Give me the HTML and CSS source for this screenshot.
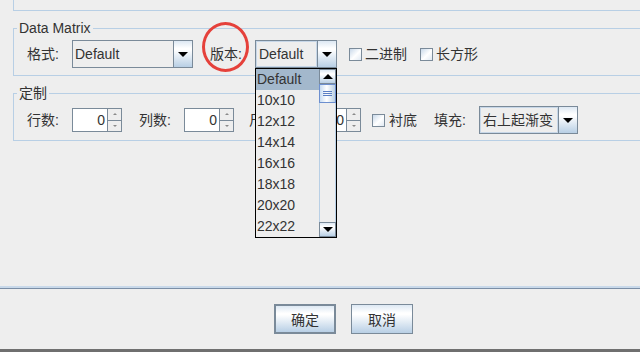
FILE: index.html
```html
<!DOCTYPE html>
<html lang="zh">
<head>
    <meta charset="UTF-8">
    <title>Data Matrix 设置</title>
    <link rel="stylesheet" href="styles.css">
</head>
<body>
    <div class="dialog">
        <!-- tail of the panel above -->
        <div class="prev-panel"></div>

        <!-- Data Matrix -->
        <fieldset class="group group-first">
            <legend>Data Matrix</legend>
            <div class="row row-first">
                <span class="label">格式:</span>
                <div class="combo combo-format">
                    <span class="combo-text">Default</span>
                    <span class="combo-arrow"></span>
                </div>
                <span class="label label-version">版本:</span>
                <div class="combo combo-version focused">
                    <span class="combo-text">Default</span>
                    <span class="combo-arrow"></span>

                    <div class="popup">
                        <ul class="popup-list">
                            <li class="selected">Default</li>
                            <li>10x10</li>
                            <li>12x12</li>
                            <li>14x14</li>
                            <li>16x16</li>
                            <li>18x18</li>
                            <li>20x20</li>
                            <li>22x22</li>
                        </ul>
                        <div class="scrollbar">
                            <span class="sb-btn sb-up"></span>
                            <span class="sb-thumb"><span class="grip"></span></span>
                            <span class="sb-track"></span>
                            <span class="sb-btn sb-down"></span>
                        </div>
                    </div>
                </div>
                <label class="check check-binary"><span class="box"></span>二进制</label>
                <label class="check check-rect"><span class="box"></span>长方形</label>
            </div>
        </fieldset>

        <!-- 定制 -->
        <fieldset class="group group-second">
            <legend>定制</legend>
            <div class="row row-second">
                <span class="label">行数:</span>
                <div class="spinner">
                    <span class="spin-value">0</span>
                    <span class="spin-buttons"><span class="spin-up"></span><span class="spin-down"></span></span>
                </div>
                <span class="label label-cols">列数:</span>
                <div class="spinner">
                    <span class="spin-value">0</span>
                    <span class="spin-buttons"><span class="spin-up"></span><span class="spin-down"></span></span>
                </div>
                <span class="label label-size">尺寸:</span>
                <div class="spinner">
                    <span class="spin-value">0</span>
                    <span class="spin-buttons"><span class="spin-up"></span><span class="spin-down"></span></span>
                </div>
                <label class="check check-bg"><span class="box"></span>衬底</label>
                <span class="label label-fill">填充:</span>
                <div class="combo combo-fill focused">
                    <span class="combo-text">右上起渐变</span>
                    <span class="combo-arrow"></span>
                </div>
            </div>
        </fieldset>

        <div class="filler"></div>
        <div class="separator"></div>

        <div class="buttons">
            <button type="button" class="btn btn-default">确定</button>
            <button type="button" class="btn">取消</button>
        </div>
        <div class="bottom-edge"></div>
    </div>

    <!-- red annotation circle -->
    <div class="mark"></div>
</body>
</html>
```

FILE: styles.css
```css
/* Swing "Ocean" look */
:root {
    --bg: #eeeeee;
    --text: #333333;
    --frame: #7a8a99;
    --titled: #b8cfe5;
    --select: #a3b8cc;
    --btn-grad: linear-gradient(#dde8f3 0%, #ffffff 28%, #ffffff 34%, #b8cfe5 100%);
}

html, body {
    margin: 0;
    padding: 0;
}

body {
    width: 640px;
    height: 352px;
    overflow: hidden;
    background-color: var(--bg);
    color: var(--text);
    font-family: "Liberation Sans", "Noto Sans CJK SC", sans-serif;
    font-size: 14px;
    position: relative;
}

.dialog {
    height: 352px;
    display: flex;
    flex-direction: column;
}

.prev-panel {
    height: 11px;
    box-sizing: border-box;
    margin-left: 13px;
    border-left: 1px solid var(--titled);
    border-bottom: 1px solid var(--titled);
}

/* titled borders */
.group {
    margin: 9px 0 0 13px;
    padding: 0 0 7px 3px;
    border: 1px solid var(--titled);
    border-right: none;
    min-inline-size: 0;
}

.group-second {
    padding-bottom: 6px;
}

.group legend {
    padding: 0 2px;
    font-size: 14px;
    line-height: 16px;
}

.row {
    display: flex;
    align-items: center;
    height: 28px;
    margin-left: 10px;
    margin-top: 4px;
}

.row-second {
    margin-top: 5px;
}

.label {
    width: 45px;
    flex-shrink: 0;
    line-height: 16px;
    white-space: nowrap;
}

.label-version { margin-left: 17px; }
.label-cols { margin-left: 17px; }
.label-size { margin-left: 15px; width: 62px; }
.label-fill { margin-left: 17px; }

/* combo boxes */
.combo {
    position: relative;
    display: flex;
    height: 28px;
    box-sizing: border-box;
    border: 1px solid var(--frame);
    background-color: var(--bg);
    flex-shrink: 0;
}

.combo-format { width: 121px; }
.combo-version { width: 82px; }
.combo-fill { width: 99px; }

.combo-text {
    flex: 1;
    padding-left: 2px;
    line-height: 26px;
    white-space: nowrap;
    overflow: hidden;
}

.focused .combo-text {
    box-shadow: inset 0 0 0 1px #c7d7e8;
    padding-left: 3px;
}

.combo-arrow {
    width: 18px;
    border-left: 1px solid var(--frame);
    background: var(--btn-grad);
    display: flex;
    align-items: center;
    justify-content: center;
}

.combo-arrow::before {
    content: "";
    border-left: 5px solid transparent;
    border-right: 5px solid transparent;
    border-top: 5px solid #000;
}

/* drop-down list */
.popup {
    position: absolute;
    left: -1px;
    top: calc(100% + 1px);
    width: 82px;
    height: 170px;
    box-sizing: border-box;
    border: 1px solid #000;
    background-color: var(--bg);
    display: flex;
    z-index: 10;
}

.popup-list {
    list-style: none;
    margin: 0;
    padding: 0;
    flex: 1;
}

.popup-list li {
    height: 21px;
    line-height: 21px;
    padding-left: 1px;
}

.popup-list li.selected {
    background-color: var(--select);
}

.scrollbar {
    width: 17px;
    display: flex;
    flex-direction: column;
}

.sb-btn {
    height: 15px;
    box-sizing: border-box;
    border: 1px solid var(--frame);
    background: var(--btn-grad);
    display: flex;
    align-items: center;
    justify-content: center;
}

.sb-up::before {
    content: "";
    border-left: 5px solid transparent;
    border-right: 5px solid transparent;
    border-bottom: 5px solid #000;
}

.sb-down::before {
    content: "";
    border-left: 5px solid transparent;
    border-right: 5px solid transparent;
    border-top: 5px solid #000;
}

.sb-thumb {
    height: 19px;
    box-sizing: border-box;
    border: 1px solid #6d8fcf;
    background: linear-gradient(90deg, #c8dcf2 0%, #ffffff 45%, #b8cfe5 100%);
    display: flex;
    align-items: center;
    justify-content: center;
}

.grip {
    width: 9px;
    height: 5px;
    background: repeating-linear-gradient(#5a7fc4 0 1px, transparent 1px 2px);
}

.sb-track {
    flex: 1;
    border-left: 1px solid var(--titled);
    border-right: 1px solid var(--titled);
}

/* check boxes */
.check {
    display: flex;
    align-items: center;
    line-height: 16px;
    white-space: nowrap;
}

.check .box {
    width: 13px;
    height: 13px;
    box-sizing: border-box;
    border: 1px solid var(--frame);
    background: linear-gradient(135deg, #c9d9ea 0%, #ffffff 55%, #dfe8f2 100%);
    margin-right: 3px;
}

.check-binary { margin-left: 12px; }
.check-rect { margin-left: 13px; }
.check-bg { margin-left: 11px; }
.check-bg .box { margin-right: 4px; }

/* spinners */
.spinner {
    display: flex;
    width: 50px;
    height: 24px;
    flex-shrink: 0;
}

.spin-value {
    flex: 1;
    box-sizing: border-box;
    background-color: #fff;
    border: 1px solid var(--frame);
    border-right: none;
    text-align: right;
    padding-right: 2px;
    line-height: 22px;
}

.spin-buttons {
    width: 15px;
    display: flex;
    flex-direction: column;
}

.spin-up, .spin-down {
    flex: 1;
    border: 1px solid var(--frame);
    background-color: var(--bg);
    display: flex;
    align-items: center;
    justify-content: center;
}

.spin-down {
    border-top: none;
}

.spin-up::before {
    content: "";
    border-left: 2px solid transparent;
    border-right: 2px solid transparent;
    border-bottom: 2px solid #8a8a8a;
}

.spin-down::before {
    content: "";
    border-left: 2px solid transparent;
    border-right: 2px solid transparent;
    border-top: 2px solid #8a8a8a;
}

/* bottom area */
.filler {
    flex: 1;
}

.separator {
    height: 0;
    border-top: 2px solid #c9d9ea;
    border-bottom: 1px solid #7b8ea6;
}

.buttons {
    height: 60px;
    box-sizing: border-box;
    padding: 15px 0 0 274px;
    display: flex;
    align-items: flex-start;
    gap: 15px;
}

.btn {
    width: 62px;
    height: 30px;
    box-sizing: border-box;
    border: 1px solid var(--frame);
    background: var(--btn-grad);
    color: var(--text);
    font-family: inherit;
    font-size: 14px;
    padding: 0;
    margin: 0;
}

.btn-default {
    border-width: 2px;
}

.bottom-edge {
    height: 3px;
    background-color: #6f6f6f;
}

/* annotation */
.mark {
    position: absolute;
    left: 202px;
    top: 22px;
    width: 47px;
    height: 50px;
    box-sizing: border-box;
    border: 3px solid #e5413b;
    border-radius: 50%;
    pointer-events: none;
}
```
